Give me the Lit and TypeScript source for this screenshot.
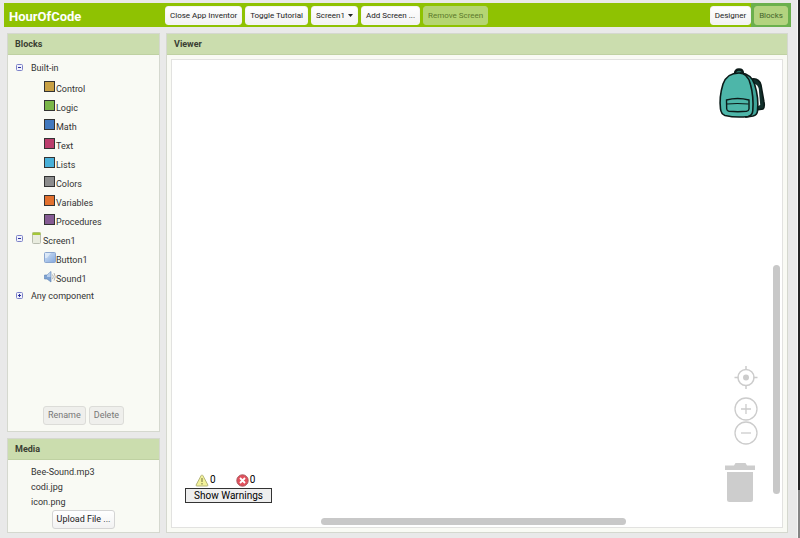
import { LitElement, html, svg, css, nothing } from "lit";
import { customElement, state } from "lit/decorators.js";

const CATEGORIES = [
  { name: "Control", color: "#c8a043" },
  { name: "Logic", color: "#7ab648" },
  { name: "Math", color: "#4178be" },
  { name: "Text", color: "#bb3d6c" },
  { name: "Lists", color: "#49b0d8" },
  { name: "Colors", color: "#8c8c8c" },
  { name: "Variables", color: "#e2702e" },
  { name: "Procedures", color: "#855b93" },
];

const MEDIA = ["Bee-Sound.mp3", "codi.jpg", "icon.png"];

const screenIcon = html`<svg class="icon" width="12" height="13" viewBox="0 0 12 13" aria-hidden="true">
  <rect x="1.5" y="0.5" width="8" height="11" rx="1" fill="#e9ecdf" stroke="#b9bdb0" />
  <path d="M1.5 0.5h8v2.5h-8z" fill="#a4c639" />
</svg>`;

const buttonIcon = html`<svg class="icon" width="12" height="12" viewBox="0 0 12 12" aria-hidden="true">
  <defs>
    <linearGradient id="b" x1="0" y1="0" x2="1" y2="1">
      <stop offset="0" stop-color="#d3e2f5" />
      <stop offset="1" stop-color="#84a9de" />
    </linearGradient>
  </defs>
  <rect x="0.5" y="0.5" width="11" height="10" rx="1" fill="url(#b)" stroke="#8ba6cf" />
  <path d="M1 1h6L3 6H1z" fill="#e6effa" opacity="0.7" />
</svg>`;

const soundIcon = html`<svg class="icon" width="12" height="12" viewBox="0 0 12 12" aria-hidden="true">
  <path d="M0.5 4h2.5L7 0.5v10.500L3 8H0.500z" fill="#7fa3d3" stroke="#5d7fb0" stroke-width="0.6" />
  <path d="M3 4L6.500 1v5H3z" fill="#b7cdea" />
  <path d="M8.500 3.500q1.500 2.300 0 4.600M10 2q2.500 3.800 0 7.600" fill="none" stroke="#b3b3b3" stroke-width="1" />
</svg>`;

@customElement("app-root")
export class AppRoot extends LitElement {
  @state() private builtInOpen = true;
  @state() private screenOpen = true;

  static styles = css`
    :host {
      display: flex;
      min-height: 100vh;
      background: #e9e9e9;
      color: #333;
      font: 9px/16px Roboto, sans-serif;
    }
    * {
      box-sizing: border-box;
    }
    .page {
      flex: 1;
      min-width: 0;
      display: flex;
      flex-direction: column;
      padding: 3px 6px 5px 4px;
    }
    .edge {
      width: 3px;
      border-left: 1px solid #f6f6f6;
      background: linear-gradient(#222 0 91%, #858585 91%);
    }
    .topbar {
      display: flex;
      align-items: center;
      height: 24px;
      background: #8fc202;
    }
    h1 {
      margin: 0;
      padding: 2px 0 0 5px;
      width: 161px;
      font-size: 13px;
      line-height: 21px;
      font-weight: 700;
      color: #fff;
    }
    .actions {
      display: flex;
      gap: 3px;
      flex: 1;
    }
    .views {
      display: flex;
      align-self: stretch;
      align-items: center;
    }
    .current {
      display: flex;
      align-items: center;
      align-self: stretch;
      padding: 0 3px;
      background: #6bb04d;
    }
    .btn {
      height: 19px;
      margin: 0;
      padding: 0 4px;
      border: 1px solid #d4d4d4;
      border-radius: 3px;
      background: linear-gradient(#fff, #f2f2f2);
      color: #222;
      font: inherit;
      line-height: 17px;
      white-space: nowrap;
    }
    .topbar .btn {
      border-color: #f4f4f4;
      font-size: 8px;
    }
    .topbar .btn.off {
      border-color: #b5d573;
      background: #b5d573;
      color: #5c7a2b;
    }
    .topbar .current .btn {
      border-color: #b3d37f;
      background: #b3d37f;
      color: #44652b;
    }
    .panel .btn.off {
      border-color: #dcdcd8;
      background: #efefec;
      color: #777;
    }
    .picker {
      display: grid;
      align-items: center;
    }
    .picker select,
    .picker svg {
      grid-area: 1 / 1;
    }
    .picker select {
      appearance: none;
      padding-right: 12px;
    }
    .picker svg {
      justify-self: end;
      margin-right: 5px;
      pointer-events: none;
    }
    .columns {
      flex: 1;
      display: flex;
      gap: 6px;
      padding: 6px 3px 0;
    }
    .side {
      display: flex;
      flex-direction: column;
      gap: 6px;
      width: 153px;
    }
    .panel {
      display: flex;
      flex-direction: column;
      border: 1px solid #d5d8cf;
      background: #f9faf4;
    }
    .blocks,
    .viewer {
      flex: 1;
    }
    h2 {
      margin: 0;
      padding: 0 7px;
      height: 21px;
      border-bottom: 1px solid #bfd1a2;
      background: #cbddae;
      font-size: 9px;
      line-height: 20px;
      font-weight: 700;
      color: #3a3f33;
    }
    .tree {
      flex: 1;
      padding: 3px 0 0 8px;
    }
    .row {
      display: flex;
      align-items: center;
      height: 19px;
    }
    .row.leaf {
      padding-left: 28px;
    }
    .row.iconed .label {
      align-self: flex-end;
      line-height: 14px;
    }
    .swatch {
      width: 11px;
      height: 11px;
      margin-right: 1px;
      border: 1px solid #333;
    }
    .toggle {
      display: flex;
      width: 7px;
      height: 7px;
      margin: 0 8px 0 0;
      padding: 0;
      border: 0;
      background: none;
    }
    .buttons {
      display: flex;
      justify-content: center;
      gap: 3px;
      padding-bottom: 6px;
    }
    ul {
      margin: 0;
      padding: 5px 0 0 23px;
      list-style: none;
      line-height: 15px;
    }
    .media .buttons {
      padding-bottom: 3px;
    }
    .workspace {
      position: relative;
      flex: 1;
      margin: 4px;
      border: 1px solid #e2e2e0;
      background: #fff;
    }
    .backpack {
      position: absolute;
      top: 8px;
      right: 15px;
    }
    .controls {
      position: absolute;
      right: 24px;
      bottom: 25px;
      display: flex;
      flex-direction: column;
      align-items: center;
    }
    .tool {
      display: flex;
      margin: 0;
      padding: 0;
      border: 0;
      background: none;
    }
    .target {
      margin-bottom: 8px;
    }
    .minus {
      margin-bottom: 18px;
    }
    .bin {
      align-self: flex-start;
      margin-left: -9px;
    }
    .bar {
      position: absolute;
      border-radius: 4px;
      background: #c8c8c8;
    }
    .vertical {
      right: 2px;
      top: 44%;
      width: 7px;
      height: 49%;
    }
    .horizontal {
      bottom: 2px;
      left: 149px;
      width: 50%;
      height: 7px;
    }
    .warnings {
      position: absolute;
      left: 13px;
      bottom: 24px;
      width: 87px;
      color: #000;
    }
    .counts {
      display: flex;
      gap: 20px;
      padding-left: 10px;
      height: 16px;
      align-items: center;
    }
    .count {
      display: flex;
      align-items: center;
      gap: 1px;
      font-size: 10px;
    }
    .show {
      display: block;
      width: 100%;
      height: 15px;
      margin: 0;
      padding: 0;
      border: 1px solid #333;
      background: #eee;
      color: #000;
      font: 400 10px/13px Roboto, sans-serif;
    }
  `;

  private toggle(open: boolean, name: string, change: () => void) {
    return html`<button class="toggle" aria-label=${name} aria-expanded=${open} @click=${change}>
      <svg width="7" height="7" viewBox="0 0 7 7" aria-hidden="true">
        <rect x="0.5" y="0.5" width="6" height="6" rx="1" fill="#f1f2fb" stroke="#7d82c9" />
        <path d="M2 3.5h3" stroke="#2c319b" />
        ${open ? nothing : svg`<path d="M3.5 2v3" stroke="#2c319b" />`}
      </svg>
    </button>`;
  }

  private renderBlocks() {
    return html`<section class="panel blocks">
      <h2>Blocks</h2>
      <div class="tree">
        <div class="row">
          ${this.toggle(this.builtInOpen, "Built-in", () => (this.builtInOpen = !this.builtInOpen))}
          <span class="label">Built-in</span>
        </div>
        ${this.builtInOpen
          ? CATEGORIES.map(
              (c) => html`<div class="row leaf iconed">
                <span class="swatch" style="background:${c.color}"></span><span class="label">${c.name}</span>
              </div>`
            )
          : nothing}
        <div class="row iconed">
          ${this.toggle(this.screenOpen, "Screen1", () => (this.screenOpen = !this.screenOpen))}
          ${screenIcon}<span class="label">Screen1</span>
        </div>
        ${this.screenOpen
          ? html`<div class="row leaf iconed">${buttonIcon}<span class="label">Button1</span></div>
              <div class="row leaf iconed">${soundIcon}<span class="label">Sound1</span></div>`
          : nothing}
        <div class="row">
          ${this.toggle(false, "Any component", () => {})}
          <span class="label">Any component</span>
        </div>
      </div>
      <div class="buttons">
        <button class="btn off" disabled>Rename</button>
        <button class="btn off" disabled>Delete</button>
      </div>
    </section>`;
  }

  private renderViewer() {
    return html`<section class="panel viewer">
      <h2>Viewer</h2>
      <div class="workspace">
        <button class="tool backpack" aria-label="Backpack">
          <svg width="50" height="52" viewBox="0 0 50 52" aria-hidden="true">
            <path d="M35 11q7-1 9 6l3 17q1 5-1 7l-6 1z" fill="#12302c" stroke="#0b1a18" stroke-width="1.500" />
            <path d="M38 16q3 1 3.800 5l1.400 16-3.200 1.500z" fill="#fff" />
            <path d="M18 5.500q0-4 4-4t4 4" fill="#2c6f66" stroke="#0b1a18" stroke-width="2.300" />
            <path d="M24 5q10 1 13.500 11 4.500 14 3 27-.3 4-4.500 5l-7 1z" fill="#3fa398" stroke="#0b1a18" stroke-width="1.600" />
            <path d="M22 5q-12 0-16 11-4 13-2.500 25 .6 5 4.500 6.500 11 2.500 23 1 4.500-1 4.800-6 1-14-2.300-26Q31 5 22 5z" fill="#4db6a9" stroke="#0b1a18" stroke-width="1.600" />
            <path d="M9.500 32q11-3 22.500 0l0 9q-.3 2-2.500 2.300-8.500 .8-17.500 0-2-.3-2.300-2.300z" fill="#4db6a9" stroke="#0b1a18" stroke-width="1.400" />
            <path d="M10 36q10-1 21.500 0" fill="none" stroke="#0b1a18" stroke-width="1.200" />
          </svg>
        </button>
        <div class="controls">
          <button class="tool target" aria-label="Center">
            <svg width="24" height="23" viewBox="0 0 24 23" fill="none" stroke="#ccc" stroke-width="1.500" aria-hidden="true">
              <circle cx="12" cy="11.500" r="8" />
              <circle cx="12" cy="11.500" r="3" fill="#ccc" stroke="none" />
              <path d="M12 0v4M12 19v4M0.500 11.500h4M19.500 11.500h4" />
            </svg>
          </button>
          <button class="tool" aria-label="Zoom in">
            <svg width="24" height="24" viewBox="0 0 24 24" fill="none" stroke="#ccc" stroke-width="1.300" aria-hidden="true">
              <circle cx="12" cy="12" r="11" /><path d="M7 12h10M12 7v10" />
            </svg>
          </button>
          <button class="tool minus" aria-label="Zoom out">
            <svg width="24" height="24" viewBox="0 0 24 24" fill="none" stroke="#ccc" stroke-width="1.300" aria-hidden="true">
              <circle cx="12" cy="12" r="11" /><path d="M7 12h10" />
            </svg>
          </button>
          <button class="tool bin" aria-label="Trash">
            <svg width="30" height="39" viewBox="0 0 30 39" fill="#cdcdcd" aria-hidden="true">
              <path d="M0 2.500h9l1.500-2.500h10L22 2.500h8v4.500H0z" />
              <path d="M2 9h26v27.500q0 2.500-2.500 2.500h-21Q2 39 2 36.500z" />
            </svg>
          </button>
        </div>
        <div class="bar vertical"></div>
        <div class="bar horizontal"></div>
        <div class="warnings">
          <div class="counts">
            <span class="count">
              <svg width="14" height="13" viewBox="0 0 14 13" aria-hidden="true">
                <path d="M7 1q.6 0 .9.600l5 9.400q.3 1-.9 1H2q-1.200 0-.9-1l5-9.400Q6.400 1 7 1z" fill="#f3f29a" stroke="#b5b57c" />
                <path d="M7 4v4M7 9v1.500" stroke="#8f8f55" stroke-width="1.300" />
              </svg>0</span>
            <span class="count">
              <svg width="13" height="13" viewBox="0 0 13 13" aria-hidden="true">
                <circle cx="6.500" cy="6.500" r="5.700" fill="#e2505c" stroke="#a8595f" />
                <path d="M4 4l5 5M9 4l-5 5" stroke="#fff" stroke-width="1.800" />
              </svg>0</span>
          </div>
          <button class="show">Show Warnings</button>
        </div>
      </div>
    </section>`;
  }

  render() {
    return html`
      <div class="page">
        <header class="topbar">
          <h1>HourOfCode</h1>
          <div class="actions">
            <button class="btn">Close App Inventor</button>
            <button class="btn">Toggle Tutorial</button>
            <div class="picker">
              <select class="btn" aria-label="Screen">
                <option>Screen1</option>
              </select>
              <svg width="5" height="3" viewBox="0 0 5 3" aria-hidden="true"><path d="M0 0h5L2.500 3z" fill="#222" /></svg>
            </div>
            <button class="btn">Add Screen ...</button>
            <button class="btn off" disabled>Remove Screen</button>
          </div>
          <div class="views">
            <button class="btn">Designer</button>
            <div class="current"><button class="btn" disabled>Blocks</button></div>
          </div>
        </header>
        <main class="columns">
          <div class="side">
            ${this.renderBlocks()}
            <section class="panel media">
              <h2>Media</h2>
              <ul>
                ${MEDIA.map((m) => html`<li>${m}</li>`)}
              </ul>
              <div class="buttons"><button class="btn">Upload File ...</button></div>
            </section>
          </div>
          ${this.renderViewer()}
        </main>
      </div>
      <div class="edge"></div>
    `;
  }
}
